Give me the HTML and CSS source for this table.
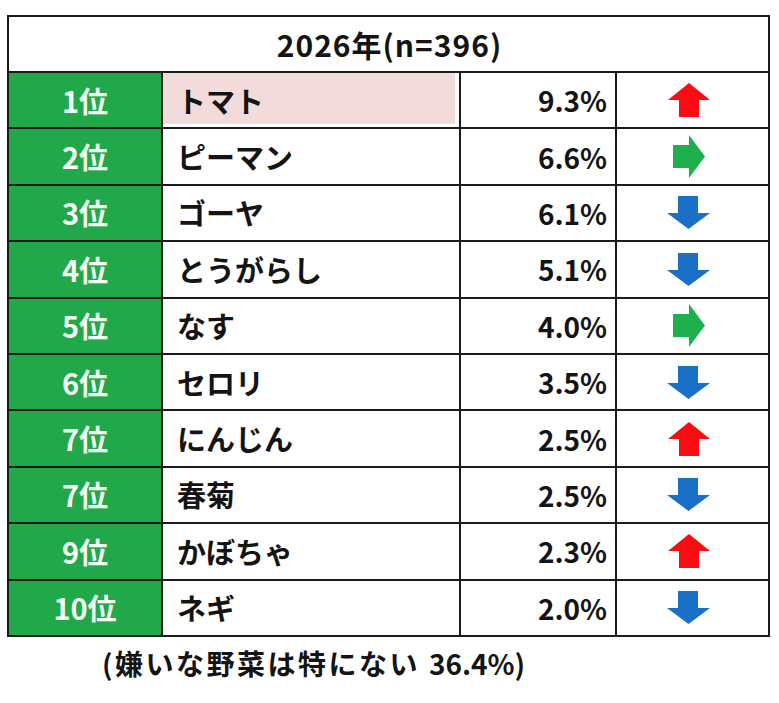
FILE: index.html
```html
<!DOCTYPE html>
<html lang="ja">
<head>
<meta charset="utf-8">
<link rel="stylesheet" href="styles.css">
</head>
<body>
<div class="page">
  <div class="rank-table">
    <div class="cell head">2026年(n=396)</div>

    <div class="cell rank">1位</div><div class="cell name hl"><span>トマト</span></div><div class="cell pct">9.3%</div>
    <div class="cell trend"><svg class="up" width="42" height="34" viewBox="0 0 42 34"><polygon points="21,0 42,17 31,17 31,34 11,34 11,17 0,17"/></svg></div>

    <div class="cell rank">2位</div><div class="cell name"><span>ピーマン</span></div><div class="cell pct">6.6%</div>
    <div class="cell trend"><svg class="right" width="32" height="43" viewBox="0 0 32 43"><polygon points="0,10 16,10 16,0 32,21.5 16,43 16,33 0,33"/></svg></div>

    <div class="cell rank">3位</div><div class="cell name"><span>ゴーヤ</span></div><div class="cell pct">6.1%</div>
    <div class="cell trend"><svg class="down" width="43" height="33" viewBox="0 0 43 33"><polygon points="11,0 31,0 31,17 43,17 21.5,33 0,17 11,17"/></svg></div>

    <div class="cell rank">4位</div><div class="cell name"><span>とうがらし</span></div><div class="cell pct">5.1%</div>
    <div class="cell trend"><svg class="down" width="43" height="33" viewBox="0 0 43 33"><polygon points="11,0 31,0 31,17 43,17 21.5,33 0,17 11,17"/></svg></div>

    <div class="cell rank">5位</div><div class="cell name"><span>なす</span></div><div class="cell pct">4.0%</div>
    <div class="cell trend"><svg class="right" width="32" height="43" viewBox="0 0 32 43"><polygon points="0,10 16,10 16,0 32,21.5 16,43 16,33 0,33"/></svg></div>

    <div class="cell rank">6位</div><div class="cell name"><span>セロリ</span></div><div class="cell pct">3.5%</div>
    <div class="cell trend"><svg class="down" width="43" height="33" viewBox="0 0 43 33"><polygon points="11,0 31,0 31,17 43,17 21.5,33 0,17 11,17"/></svg></div>

    <div class="cell rank">7位</div><div class="cell name"><span>にんじん</span></div><div class="cell pct">2.5%</div>
    <div class="cell trend"><svg class="up" width="42" height="34" viewBox="0 0 42 34"><polygon points="21,0 42,17 31,17 31,34 11,34 11,17 0,17"/></svg></div>

    <div class="cell rank">7位</div><div class="cell name"><span>春菊</span></div><div class="cell pct">2.5%</div>
    <div class="cell trend"><svg class="down" width="43" height="33" viewBox="0 0 43 33"><polygon points="11,0 31,0 31,17 43,17 21.5,33 0,17 11,17"/></svg></div>

    <div class="cell rank">9位</div><div class="cell name"><span>かぼちゃ</span></div><div class="cell pct">2.3%</div>
    <div class="cell trend"><svg class="up" width="42" height="34" viewBox="0 0 42 34"><polygon points="21,0 42,17 31,17 31,34 11,34 11,17 0,17"/></svg></div>

    <div class="cell rank">10位</div><div class="cell name"><span>ネギ</span></div><div class="cell pct">2.0%</div>
    <div class="cell trend"><svg class="down" width="43" height="33" viewBox="0 0 43 33"><polygon points="11,0 31,0 31,17 43,17 21.5,33 0,17 11,17"/></svg></div>
  </div>
  <p class="note">(嫌いな野菜は特にない <span class="num">36.4%</span>)</p>
</div>
</body>
</html>
```

FILE: styles.css
```css
html, body {
  margin: 0;
  padding: 0;
  background: #ffffff;
}

body {
  font-family: "Noto Sans CJK JP", "Noto Sans", sans-serif;
  font-weight: 700;
  color: #141414;
}

.page {
  padding: 15px 9px 0 7px;
}

.rank-table {
  width: 763px;
  box-sizing: border-box;
  display: grid;
  grid-template-columns: 152px 296px 154px 151px;
  grid-template-rows: 54px repeat(10, 54.4px);
  gap: 2px;
  padding: 2px;
  background: #1c1c1c;
}

.cell {
  background: #ffffff;
  display: flex;
  align-items: center;
  line-height: 1;
}

.head {
  grid-column: 1 / -1;
  justify-content: center;
  font-size: 30px;
  letter-spacing: 1px;
  padding-left: 2px;
}

.rank {
  background: #21a84b;
  color: #f4fff4;
  justify-content: center;
  font-size: 29px;
}

.name {
  font-size: 29px;
  padding-left: 14px;
}

.name.hl {
  background: #f2dcdb;
  box-shadow: inset -4px -3px 0 #ffffff;
}

.pct {
  justify-content: flex-end;
  padding-right: 8px;
  font-size: 28px;
}

.trend {
  justify-content: center;
  padding-right: 8px;
}

.trend svg {
  display: block;
}

.up polygon { fill: #ff0a14; }
.down polygon { fill: #1a6fc6; }
.right polygon { fill: #1eb04c; }

.note {
  margin: 10px 0 0 95px;
  font-size: 28px;
  letter-spacing: 2.5px;
  line-height: 1.2;
}

.note .num {
  letter-spacing: 0;
}
```
